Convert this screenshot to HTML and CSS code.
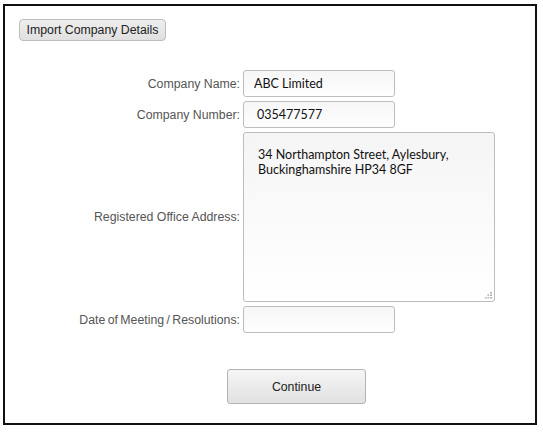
FILE: index.html
```html
<!DOCTYPE html>
<html>
<head>
<meta charset="utf-8">
<link rel="stylesheet" href="styles.css">
</head>
<body>
<div class="frame">
  <button class="import-btn" type="button">Import Company Details</button>
  <form class="company-form">
    <label class="field-label" for="cname">Company Name:</label>
    <input class="field-input" id="cname" type="text" value="ABC Limited">
    <label class="field-label" for="cnum">Company Number:</label>
    <input class="field-input field-number" id="cnum" type="text" value="035477577">
    <label class="field-label" for="addr">Registered Office Address:</label>
    <div class="area-wrap">
      <textarea class="field-area" id="addr">34 Northampton Street, Aylesbury, Buckinghamshire HP34 8GF</textarea>
      <svg class="grip" width="7" height="7" viewBox="0 0 7 7" aria-hidden="true">
        <rect x="5" y="0" width="2" height="1.5" fill="#b0b0b0"/>
        <rect x="2.5" y="2.5" width="1.5" height="1.5" fill="#b0b0b0"/>
        <rect x="5" y="2.5" width="2" height="1.5" fill="#b0b0b0"/>
        <rect x="0" y="5" width="1.5" height="1.5" fill="#b0b0b0"/>
        <rect x="2.5" y="5" width="1.5" height="1.5" fill="#b0b0b0"/>
        <rect x="5" y="5" width="2" height="1.5" fill="#b0b0b0"/>
      </svg>
    </div>
    <label class="field-label label-date" for="mdate">Date of Meeting / Resolutions:</label>
    <input class="field-input" id="mdate" type="text" value="">
  </form>
  <div class="actions">
    <button class="continue-btn" type="button">Continue</button>
  </div>
</div>
</body>
</html>
```

FILE: styles.css
```css
* { box-sizing: border-box; }
html, body { margin: 0; padding: 0; background: #fff; }
body { font-family: "Liberation Sans", Arial, sans-serif; }

.frame {
  margin: 4px 6px 0 3px;
  width: 534px;
  height: 421px;
  border: 2px solid #111;
  padding: 13px 14px;
}

.import-btn {
  display: block;
  height: 22px;
  width: 147px;
  padding: 0;
  font-family: "Liberation Sans", Arial, sans-serif;
  font-size: 12.3px;
  color: #222;
  border: 1px solid #bdbdbd;
  border-radius: 4px;
  background: linear-gradient(#eeeeee, #e0e0e0);
}

.company-form {
  margin-top: 29px;
  display: grid;
  grid-template-columns: 221px auto;
  column-gap: 3px;
  row-gap: 4px;
  align-items: center;
  justify-items: start;
}

.field-label {
  justify-self: end;
  font-size: 12.3px;
  color: #555;
  white-space: nowrap;
}

.label-date { word-spacing: -1px; }

.field-input, .field-area {
  font-family: Lato, "Open Sans", sans-serif;
  font-size: 12.5px;
  color: #111;
  border: 1px solid #bdbdbd;
  border-radius: 3px;
  background: linear-gradient(#f6f6f6, #fefefe);
  outline: none;
}

.field-input {
  width: 152px;
  height: 27px;
  padding: 0 10px;
}

.field-number { padding-left: 13px; }

.area-wrap {
  position: relative;
  width: 252px;
  height: 170px;
}

.field-area {
  display: block;
  width: 252px;
  height: 170px;
  padding: 14px 14px;
  line-height: 15px;
  resize: none;
  background: linear-gradient(#f5f5f5, #ffffff);
}

.grip {
  position: absolute;
  right: 3px;
  bottom: 3px;
}

.actions {
  margin-top: 36px;
  padding-left: 208px;
}

.continue-btn {
  width: 139px;
  height: 35px;
  padding: 0;
  font-family: "Liberation Sans", Arial, sans-serif;
  font-size: 12.3px;
  color: #222;
  border: 1px solid #b3b3b3;
  border-radius: 3px;
  background: linear-gradient(#f5f5f5, #e1e1e1);
}
```
